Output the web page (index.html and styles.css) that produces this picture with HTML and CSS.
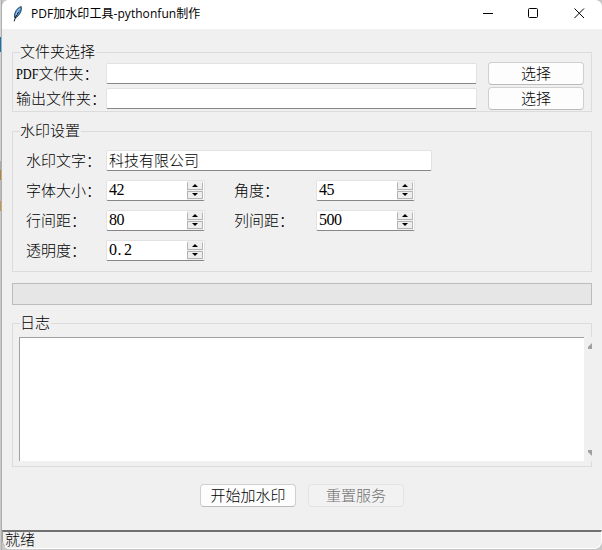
FILE: index.html
```html
<!DOCTYPE html>
<html lang="zh-CN">
<head>
<meta charset="utf-8">
<title>PDF加水印工具</title>
<link rel="stylesheet" href="styles.css">
</head>
<body>
<div class="desktop">
  <div class="edge"></div>
  <main class="window">
    <header class="titlebar">
      <svg class="feather" width="12" height="18" viewBox="0 0 12 18"><path d="M2.500 12.500C2 8 4.500 3 9.200 1.500C10.200 5 8 10.500 3.200 13Z" fill="#4b91cc" stroke="#243a52" stroke-width=".9"/><path d="M6.500 7C4.500 10 3 13 2.200 16.300" fill="none" stroke="#101820" stroke-width="1"/><path d="M7.800 3.500C5.600 5.500 4.500 8 4.100 10" fill="none" stroke="#b4daf5" stroke-width="1"/></svg>
      <h1 class="title">PDF加水印工具-pythonfun制作</h1>
      <svg class="controls" width="104" height="12" viewBox="0 0 104 12" fill="none" stroke="#000" stroke-width="1"><path d="M0 6.500H10"/><rect x="45.500" y="1.500" width="9" height="9" rx="1"/><path d="M91.500 1.500L101 11M101 1.500L91.500 11"/></svg>
    </header>
    <section class="group files">
      <h2 class="legend w5">文件夹选择</h2>
      <div class="filerow"><span class="label"><span class="latin"><span class="narrow">PDF</span></span>文件夹<span class="colon">：</span></span><div class="field"></div><div class="button">选择</div></div>
      <div class="filerow"><span class="label">输出文件夹<span class="colon">：</span></span><div class="field"></div><div class="button">选择</div></div>
    </section>
    <section class="group settings">
      <h2 class="legend w4">水印设置</h2>
      <div class="row"><span class="label">水印文字<span class="colon">：</span></span><div class="field text">科技有限公司</div></div>
      <div class="row"><span class="label">字体大小<span class="colon">：</span></span><div class="field spin"><span class="num">42</span><span class="arrows"><i class="up"></i><i class="down"></i></span></div><span class="label second">角度<span class="colon">：</span></span><div class="field spin"><span class="num">45</span><span class="arrows"><i class="up"></i><i class="down"></i></span></div></div>
      <div class="row"><span class="label">行间距<span class="colon">：</span></span><div class="field spin"><span class="num">80</span><span class="arrows"><i class="up"></i><i class="down"></i></span></div><span class="label second">列间距<span class="colon">：</span></span><div class="field spin"><span class="num">500</span><span class="arrows"><i class="up"></i><i class="down"></i></span></div></div>
      <div class="row"><span class="label">透明度<span class="colon">：</span></span><div class="field spin"><span class="num">0<span class="dot">.</span>2</span><span class="arrows"><i class="up"></i><i class="down"></i></span></div></div>
    </section>
    <div class="progress"></div>
    <section class="group log">
      <h2 class="legend w2">日志</h2>
      <div class="logbody">
        <div class="logtext"></div>
        <div class="scroll"><svg width="4" height="6" viewBox="0 0 4 6"><path d="M4 0V6H0V4Z" fill="#a0a0a0"/></svg><svg width="4" height="6" viewBox="0 0 4 6"><path d="M0 0H4V6L0 2Z" fill="#a0a0a0"/></svg></div>
      </div>
    </section>
    <div class="actions"><div class="button">开始加水印</div><div class="button disabled">重置服务</div></div>
    <footer class="status">就绪</footer>
  </main>
</div>
</body>
</html>
```
FILE: styles.css
```css
* { box-sizing: border-box; }
body {
  margin: 0;
  width: 602px;
  height: 550px;
  overflow: hidden;
  background: #c8c8c8;
  color: #000;
  font: 300 15px/20px "Noto Sans CJK SC", sans-serif;
}
h1, h2 { margin: 0; font-weight: inherit; }
.desktop { display: flex; height: 550px; }
.edge {
  width: 2px;
  border-right: 1px solid #adadad;
  background: linear-gradient(#d5d5d5 37px, #1673b1 37px 52px, #d0d0d0 52px 161px, #aaa 161px 170px, #b9852e 170px 180px, #bbb 180px 201px, #c99645 201px 211px, #c9c9c9 211px);
}
.window {
  width: 600px;
  height: 549px;
  display: flex;
  flex-direction: column;
  overflow: hidden;
  background: #f0f0f0;
  border-radius: 7px 7px 8px 8px;
}
.titlebar {
  height: 29px;
  flex: none;
  display: flex;
  align-items: center;
  padding: 0 15px 3px 10px;
  background: #fff;
}
.feather { margin-top: 1px; }
.title {
  margin: 1px 0 0 7px;
  font: 400 12px/18px "Open Sans", "Noto Sans CJK SC", sans-serif;
  letter-spacing: 0.05px;
  white-space: nowrap;
}
.controls { margin-left: auto; }
.group {
  flex: none;
  width: 580px;
  margin-left: 10px;
  border: 1px solid #dcdcdc;
}
.legend {
  height: 20px;
  margin: -11px 0 0 7px;
  background: #f0f0f0;
  font-size: 15px;
  line-height: 18px;
}
.w5 { width: 76px; }
.w4 { width: 61px; }
.w2 { width: 31px; }
.label { flex: none; white-space: nowrap; }
.colon { display: inline-block; width: 15px; }
.latin { display: inline-block; width: 22.5px; }
.narrow {
  display: inline-block;
  font: 400 15px/18px "Liberation Serif", serif;
  transform: scaleX(0.82);
  transform-origin: left;
}
.field {
  height: 21px;
  background: #fff;
  border: 1px solid #e2e2e2;
  border-bottom-color: #868686;
  border-radius: 2px;
}
.button {
  width: 96px;
  height: 23px;
  background: #fdfdfd;
  border: 1px solid #d0d0d0;
  border-bottom-color: #bbb;
  border-radius: 4px;
  line-height: 19px;
  text-align: center;
}
.files { height: 60px; margin-top: 23px; }
.filerow {
  display: grid;
  grid-template-columns: 91px 371px 96px;
  height: 25px;
  padding-left: 3px;
  align-items: center;
}
.files .legend { margin-bottom: -1px; }
.filerow .label { margin-top: -1px; }
.filerow .field { margin-left: -1px; width: 371px; }
.filerow .button { margin-left: 10px; }
.settings { height: 141px; margin-top: 19px; }
.row { display: flex; align-items: center; height: 30px; padding-left: 13px; }
.row .label { width: 80px; }
.row .second { width: 82px; margin-left: 29px; }
.settings .legend { margin-bottom: 4px; }
.text { width: 326px; padding-left: 2px; line-height: 17px; }
.spin {
  width: 99px;
  display: flex;
  justify-content: space-between;
  padding: 0 1px 0 2px;
}
.num {
  font: 400 16px/18px "Liberation Serif", serif;
  letter-spacing: -0.5px;
}
.dot { margin-left: 1px; letter-spacing: 2.5px; }
.arrows {
  display: flex;
  flex-direction: column;
  gap: 1px;
  width: 16px;
  padding-top: 1px;
  background: #f0f0f0;
}
.arrows i {
  display: flex;
  align-items: center;
  justify-content: center;
  height: 8px;
  border: 1px solid #b4b4b4;
  background: #eee;
}
.up { border-top-color: #eee !important; }
.arrows i::before { content: ""; border: 3px solid transparent; }
.up::before { border-top-width: 0 !important; border-bottom-color: #000 !important; }
.down::before { border-bottom-width: 0 !important; border-top-color: #000 !important; }
.progress {
  flex: none;
  width: 580px;
  height: 22px;
  margin: 11px 0 0 10px;
  background: #e6e6e6;
  border: 1px solid #bcbcbc;
}
.log { height: 144px; margin-top: 18px; }
.logbody { display: flex; height: 124px; margin: 4px -1px 0 6px; }
.logtext {
  width: 565px;
  background: #fff;
  border-top: 1px solid #a0a0a0;
  border-left: 1px solid #a0a0a0;
}
.scroll {
  width: 8px;
  display: flex;
  flex-direction: column;
  align-items: flex-end;
  justify-content: space-between;
  padding: 6px 0 5px;
  background: #f0f0f0;
}
.actions { display: flex; gap: 12px; margin: 17px 0 0 198px; }
.disabled { color: #707070; background: #f2f2f2; border-color: #e4e4e4; }
.status {
  height: 19px;
  margin-top: auto;
  padding-left: 2px;
  border: 1px solid #a0a0a0;
  border-top: 2px solid #707070;
  border-right-color: #fff;
  border-bottom-color: #fff;
  border-radius: 0 0 8px 8px;
  line-height: 14px;
}
```
